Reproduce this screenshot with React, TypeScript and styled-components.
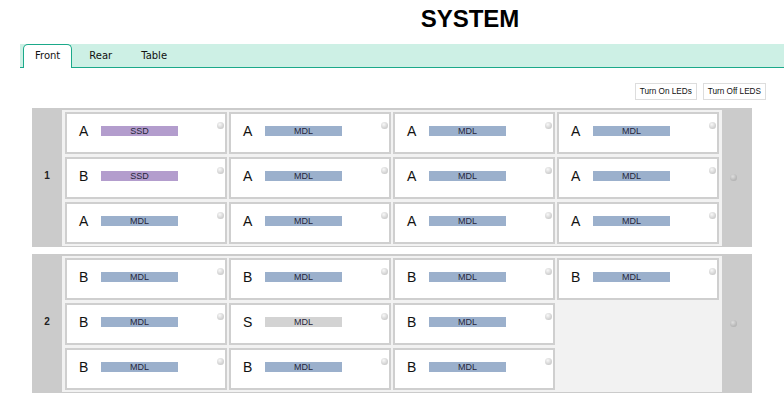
import React from "react";
import styled, { createGlobalStyle } from "styled-components";

const Global = createGlobalStyle`
  html, body { margin: 0; padding: 0; background: #ffffff; }
  body { font-family: "Liberation Sans", Arial, sans-serif; color: #000; }
`;

const Page = styled.div`
  width: 784px;
  height: 413px;
  overflow: hidden;
  display: flex;
  flex-direction: column;
`;

const Header = styled.div`
  display: flex;
  justify-content: center;
  padding: 5px 0 0 156px;
  height: 28px;
`;

const Title = styled.h1`
  margin: 0;
  font-family: "Liberation Sans", Arial, sans-serif;
  font-weight: bold;
  font-size: 24px;
  line-height: 28px;
  color: #000;
`;

const TabBar = styled.div`
  margin: 11px 0 0 20px;
  height: 23px;
  background: #cdf0e5;
  border-bottom: 1px solid #1ba98a;
  display: flex;
  align-items: flex-start;
  gap: 5px;
  padding-left: 3px;
`;

const Tab = styled.div<{ $active?: boolean }>`
  box-sizing: border-box;
  height: 24px;
  margin-bottom: -1px;
  padding: 0 11px;
  font-family: "DejaVu Sans", Verdana, sans-serif;
  font-size: 10px;
  line-height: 22px;
  color: #111;
  border: 1px solid ${(p) => (p.$active ? "#1ba98a" : "transparent")};
  border-bottom: none;
  border-radius: 5px 5px 0 0;
  background: ${(p) => (p.$active ? "#ffffff" : "transparent")};
`;

const Toolbar = styled.div`
  display: flex;
  justify-content: flex-end;
  gap: 6px;
  margin-top: 15px;
  padding-right: 18px;
`;

const LedButton = styled.button`
  height: 17px;
  box-sizing: border-box;
  padding: 0 4px;
  border: 1px solid #dddddd;
  background: #ffffff;
  font-family: "Liberation Sans", Arial, sans-serif;
  font-size: 8.2px;
  line-height: 15px;
  color: #111;
  cursor: pointer;
`;

const Racks = styled.div`
  display: flex;
  flex-direction: column;
  gap: 7px;
  margin: 8px 0 0 32px;
  width: 720px;
`;

const Rack = styled.div`
  display: grid;
  grid-template-columns: 30px 1fr 30px;
  background: #cbcbcb;
  padding: 2px 0 1px;
`;

const RackLabel = styled.div`
  display: flex;
  align-items: center;
  justify-content: center;
  padding-bottom: 6px;
  font-family: "Liberation Sans", Arial, sans-serif;
  font-weight: bold;
  font-size: 10px;
  color: #222;
`;

const Bays = styled.div`
  background: #f2f2f2;
  padding: 2px 3px;
  display: grid;
  grid-template-columns: repeat(4, 1fr);
  grid-auto-rows: 42px;
  column-gap: 2px;
  row-gap: 3px;
`;

const RackSide = styled.div`
  display: flex;
  align-items: center;
  padding: 0 0 2px 8px;
`;

const Card = styled.div`
  position: relative;
  box-sizing: border-box;
  background: #ffffff;
  border: 2px solid #cfcfcf;
  display: flex;
  align-items: flex-start;
  padding: 10px 0 0 12px;
`;

const Slot = styled.span`
  width: 22px;
  font-family: "Liberation Sans", Arial, sans-serif;
  font-size: 14px;
  line-height: 14px;
  color: #111;
`;

const DriveBar = styled.span<{ $kind: "ssd" | "mdl" | "spare" }>`
  width: 77px;
  height: 10px;
  margin-top: 2px;
  background: ${(p) =>
    p.$kind === "ssd" ? "#b39dcd" : p.$kind === "mdl" ? "#9bb0cc" : "#d3d3d3"};
  font-family: "Liberation Sans", Arial, sans-serif;
  font-size: 9px;
  line-height: 10px;
  text-align: center;
  color: #26263a;
`;

const Led = styled.span`
  position: absolute;
  top: 8px;
  right: 1px;
  width: 7px;
  height: 7px;
  border-radius: 50%;
  background: radial-gradient(circle at 40% 35%, #f8f8f8 0%, #d6d6d6 55%, #bcbcbc 100%);
`;

const RackLed = styled.span`
  width: 7px;
  height: 7px;
  border-radius: 50%;
  background: radial-gradient(circle at 40% 35%, #dedede 0%, #bcbcbc 55%, #a6a6a6 100%);
`;

type Drive = { slot: string; kind: "ssd" | "mdl" | "spare"; label: string } | null;

const rack1: Drive[] = [
  { slot: "A", kind: "ssd", label: "SSD" },
  { slot: "A", kind: "mdl", label: "MDL" },
  { slot: "A", kind: "mdl", label: "MDL" },
  { slot: "A", kind: "mdl", label: "MDL" },
  { slot: "B", kind: "ssd", label: "SSD" },
  { slot: "A", kind: "mdl", label: "MDL" },
  { slot: "A", kind: "mdl", label: "MDL" },
  { slot: "A", kind: "mdl", label: "MDL" },
  { slot: "A", kind: "mdl", label: "MDL" },
  { slot: "A", kind: "mdl", label: "MDL" },
  { slot: "A", kind: "mdl", label: "MDL" },
  { slot: "A", kind: "mdl", label: "MDL" },
];

const rack2: Drive[] = [
  { slot: "B", kind: "mdl", label: "MDL" },
  { slot: "B", kind: "mdl", label: "MDL" },
  { slot: "B", kind: "mdl", label: "MDL" },
  { slot: "B", kind: "mdl", label: "MDL" },
  { slot: "B", kind: "mdl", label: "MDL" },
  { slot: "S", kind: "spare", label: "MDL" },
  { slot: "B", kind: "mdl", label: "MDL" },
  null,
  { slot: "B", kind: "mdl", label: "MDL" },
  { slot: "B", kind: "mdl", label: "MDL" },
  { slot: "B", kind: "mdl", label: "MDL" },
  null,
];

function RackView({ n, drives }: { n: number; drives: Drive[] }) {
  return (
    <Rack>
      <RackLabel>{n}</RackLabel>
      <Bays>
        {drives.map((d, i) =>
          d ? (
            <Card key={i}>
              <Slot>{d.slot}</Slot>
              <DriveBar $kind={d.kind}>{d.label}</DriveBar>
              <Led />
            </Card>
          ) : (
            <div key={i} />
          )
        )}
      </Bays>
      <RackSide>
        <RackLed />
      </RackSide>
    </Rack>
  );
}

export default function App() {
  return (
    <Page>
      <Global />
      <Header>
        <Title>SYSTEM</Title>
      </Header>
      <TabBar>
        <Tab $active>Front</Tab>
        <Tab>Rear</Tab>
        <Tab>Table</Tab>
      </TabBar>
      <Toolbar>
        <LedButton>Turn On LEDs</LedButton>
        <LedButton>Turn Off LEDS</LedButton>
      </Toolbar>
      <Racks>
        <RackView n={1} drives={rack1} />
        <RackView n={2} drives={rack2} />
      </Racks>
    </Page>
  );
}
